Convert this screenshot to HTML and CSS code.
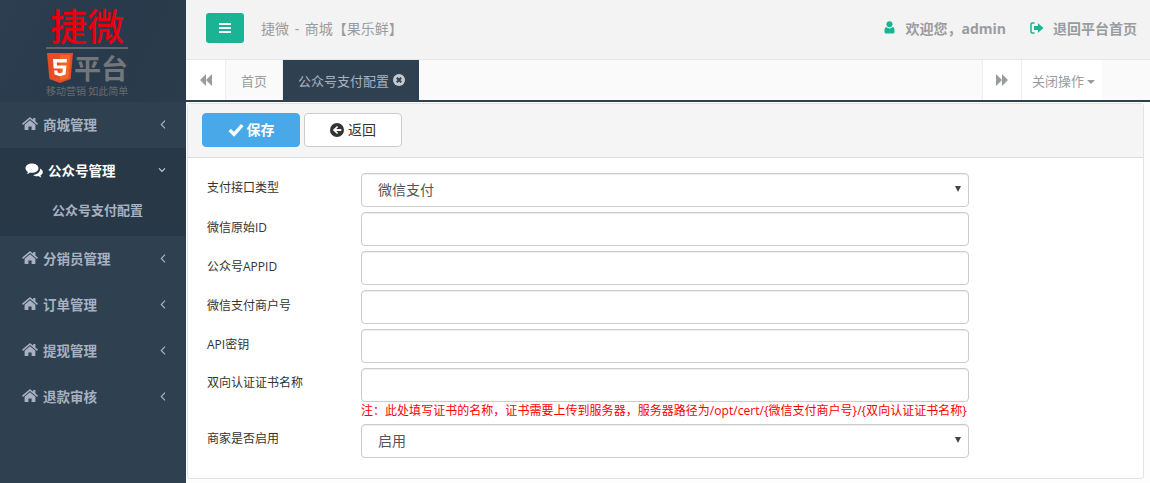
FILE: index.html
```html
<!DOCTYPE html>
<html lang="zh-CN">
<head>
<meta charset="utf-8">
<title>捷微 - 商城</title>
<link rel="stylesheet" href="styles.css">
</head>
<body>
<svg class="sprite" width="0" height="0">
  <symbol id="i-home" viewBox="0 0 16 14"><path fill="currentColor" d="M8 3.2 2.6 7.7V12.500a.5.500 0 0 0 .5.500H6.400V9.500H9.600V13H12.900a.5.500 0 0 0 .5-.5V7.700ZM15.800 6.500 13.400 4.500V1H11.200V2.700L8.600.5a1 1 0 0 0-1.200 0L.2 6.500a.4.400 0 0 0 0 .5l.6.700a.4.400 0 0 0 .5 0L8 2.100l6.700 5.600a.4.400 0 0 0 .5 0l.6-.7a.4.400 0 0 0 0-.5Z"/></symbol>
  <symbol id="i-chev-left" viewBox="0 0 6 9"><path fill="none" stroke="currentColor" stroke-width="1.200" d="M5 .7 1.300 4.500 5 8.300"/></symbol>
</svg>
<div class="app">
  <aside class="sidebar">
    <div class="logo">
      <div class="logo-name">捷微</div>
      <div class="logo-rule"></div>
      <div class="logo-row">
        <svg class="shield" viewBox="0 0 26 30"><path fill="#e44d26" d="M0 0h26l-2.400 26L13 30 2.400 26Z"/><path fill="#f16529" d="M13 2v25.500l8.500-2.400L23.500 2Z"/><path fill="#fff" d="M6 6h14l-.3 3.400H9.800l.2 3.200h9.400l-.8 9L13 23.300l-5.500-1.700-.3-4.100h3.200l.2 2 2.400.7 2.500-.7.300-3.900H6.700Z"/></svg>
        <span class="logo-ping">平台</span>
      </div>
      <div class="logo-slogan">移动营销 如此简单</div>
    </div>
    <nav>
      <a class="menu-item"><svg class="mi"><use href="#i-home"/></svg><span class="mt">商城管理</span><svg class="chev"><use href="#i-chev-left"/></svg></a>
      <div class="menu-open">
        <a class="menu-item active">
          <svg class="mi chat" viewBox="0 0 18 15"><path fill="currentColor" d="M7 .5C3.300.500.500 2.600.500 5.200c0 1.500 1 2.900 2.500 3.800-.2.800-.7 1.500-1.300 2.100 1.300-.2 2.500-.7 3.400-1.500.6.100 1.200.2 1.900.2 3.700 0 6.500-2.100 6.500-4.600S10.700.500 7 .5Z"/><path fill="currentColor" d="M15 5.500c.1.300.1.500.1.800 0 3-3 5.400-7 5.600 1 .8 2.400 1.300 3.900 1.300.5 0 1-.1 1.500-.2.800.7 1.900 1.200 3 1.400-.5-.6-.9-1.200-1-1.900 1.500-.8 2.300-2 2.300-3.400 0-1.500-1.100-2.800-2.800-3.600Z"/></svg>
          <span class="mt">公众号管理</span>
          <svg class="chev-d" viewBox="0 0 12 8"><path fill="none" stroke="currentColor" stroke-width="1.800" d="M1.500 1.500 6 6l4.500-4.500"/></svg>
        </a>
        <a class="submenu-item">公众号支付配置</a>
      </div>
      <a class="menu-item"><svg class="mi"><use href="#i-home"/></svg><span class="mt">分销员管理</span><svg class="chev"><use href="#i-chev-left"/></svg></a>
      <a class="menu-item"><svg class="mi"><use href="#i-home"/></svg><span class="mt">订单管理</span><svg class="chev"><use href="#i-chev-left"/></svg></a>
      <a class="menu-item"><svg class="mi"><use href="#i-home"/></svg><span class="mt">提现管理</span><svg class="chev"><use href="#i-chev-left"/></svg></a>
      <a class="menu-item"><svg class="mi"><use href="#i-home"/></svg><span class="mt">退款审核</span><svg class="chev"><use href="#i-chev-left"/></svg></a>
    </nav>
  </aside>
  <main class="main">
    <header class="topbar">
      <button class="menu-btn" type="button" aria-label="menu"><svg viewBox="0 0 12 10" class="bars"><path fill="#fff" d="M0 0h12v2H0zM0 4h12v2H0zM0 8h12v2H0z"/></svg></button>
      <span class="crumb">捷微 - 商城【果乐鲜】</span>
      <div class="top-right">
        <svg class="ti" viewBox="0 0 12 14"><circle cx="6" cy="3.500" r="3.300" fill="currentColor"/><path fill="currentColor" d="M2.500 6.500C1 7 .5 8.500.5 11c0 1.500.8 2.500 2 2.500h7c1.200 0 2-1 2-2.500 0-2.500-.5-4-2-4.500-1 1-2.100 1.500-3.500 1.500S3.500 7.500 2.500 6.500Z"/></svg>
        <span class="tt welcome">欢迎您，admin</span>
        <svg class="ti out" viewBox="0 0 14 12"><path fill="none" stroke="currentColor" stroke-width="1.500" d="M4.500 1H2.200C1.500 1 1 1.500 1 2.200v7.600c0 .7.500 1.200 1.200 1.200h2.300"/><path fill="currentColor" d="M8 1.200 13.500 6 8 10.800V8H4V4h4Z"/></svg>
        <span class="tt">退回平台首页</span>
      </div>
    </header>
    <div class="tabs">
      <button class="tab-arrow" type="button" aria-label="back"><svg viewBox="0 0 12 12" class="dbl"><path fill="currentColor" d="M6 0v12L0 6ZM12 0v12L6 6Z"/></svg></button>
      <a class="tab">首页</a>
      <a class="tab current">公众号支付配置<svg class="tab-x" viewBox="0 0 12 12"><circle cx="6" cy="6" r="6" fill="#c4c9d0"/><path stroke="#2f4050" stroke-width="2" d="m3.800 3.800 4.400 4.400m0-4.400-4.400 4.400"/></svg></a>
      <span class="tab-fill"></span>
      <button class="tab-arrow right" type="button" aria-label="forward"><svg viewBox="0 0 12 12" class="dbl"><path fill="currentColor" d="M0 0v12l6-6ZM6 0v12l6-6Z"/></svg></button>
      <a class="tab-close">关闭操作<i class="caret"></i></a>
      <span class="tab-end"></span>
    </div>
    <section class="panel">
      <div class="toolbar">
        <button class="btn primary" type="button"><svg viewBox="0 0 14 12" class="bi"><path fill="none" stroke="#fff" stroke-width="3" d="m1.500 6 3.800 3.800 7.200-8"/></svg>保存</button>
        <button class="btn plain" type="button"><svg viewBox="0 0 14 14" class="bi back"><circle cx="7" cy="7" r="7" fill="#333"/><path fill="#fff" d="M2.800 7 7 2.900l1.200 1.200-1.900 1.800h5v2.200h-5l1.900 1.800L7 11.100Z"/></svg>返回</button>
      </div>
      <form class="form">
        <div class="row"><label class="lbl">支付接口类型</label><div class="sel"><select class="ctl"><option>微信支付</option></select></div></div>
        <div class="row"><label class="lbl low">微信原始ID</label><input class="ctl" type="text"></div>
        <div class="row"><label class="lbl low">公众号APPID</label><input class="ctl" type="text"></div>
        <div class="row"><label class="lbl low">微信支付商户号</label><input class="ctl" type="text"></div>
        <div class="row"><label class="lbl low">API密钥</label><input class="ctl" type="text"></div>
        <div class="row note-row">
          <label class="lbl">双向认证证书名称</label>
          <div class="stack">
            <input class="ctl" type="text">
            <div class="note">注：此处填写证书的名称，证书需要上传到服务器，服务器路径为/opt/cert/{微信支付商户号}/{双向认证证书名称}</div>
          </div>
        </div>
        <div class="row"><label class="lbl">商家是否启用</label><div class="sel"><select class="ctl"><option>启用</option></select></div></div>
      </form>
    </section>
  </main>
</div>
</body>
</html>
```
FILE: styles.css
```css
* { box-sizing: border-box; }
html, body { margin: 0; height: 100%; }
body {
  font-family: "Open Sans", "Noto Sans CJK SC", "Liberation Sans", sans-serif;
  font-size: 13px;
  color: #676a6c;
  background: #fdfdfd;
  overflow: hidden;
}
.sprite { position: absolute; }
.app { display: flex; width: 1150px; height: 483px; }

/* Sidebar */
.sidebar { width: 186px; flex: none; background: #2f4050; color: #a7b1c2; }
.logo {
  height: 102px;
  padding: 6px 0 0 46px;
  background: linear-gradient(115deg, #2c3e50 0%, #283a4b 55%, #2b3c4d 100%);
}
.logo-name {
  width: 82px;
  height: 41px;
  font: 500 37px/39px "Noto Sans CJK SC", sans-serif;
  color: #e60012;
  text-align: center;
  white-space: nowrap;
}
.logo-rule { width: 82px; height: 2px; background: #5f676f; }
.logo-row { display: flex; align-items: center; height: 30px; width: 82px; margin-top: 4px; }
.shield { width: 26px; height: 30px; margin-left: 1px; flex: none; }
.logo-ping {
  margin-left: 1px;
  font: 700 27px/30px "Noto Sans CJK SC", sans-serif;
  color: #73777b;
  white-space: nowrap;
}
.logo-slogan {
  width: 84px;
  margin-top: 1px;
  font: 400 10px/14px "Noto Sans CJK SC", sans-serif;
  color: #666b70;
  white-space: nowrap;
}
.menu-item {
  display: flex;
  align-items: center;
  height: 46px;
  padding: 0 0 2px 22px;
  color: #a7b1c2;
  font-size: 13.500px;
  font-weight: 700;
}
.mi { width: 16px; height: 14px; flex: none; margin-right: 5px; color: #a7b1c2; }
.mt { flex: 1; white-space: nowrap; }
.chev { width: 6px; height: 9px; margin-right: 20px; flex: none; color: #a7b1c2; }
.menu-open { background: #293846; height: 88px; }
.menu-item.active { padding-left: 25px; color: #fff; }
.active .mi { width: 18px; height: 15px; color: #fff; }
.chev-d { width: 8px; height: 6px; margin-right: 20px; flex: none; color: #c6ccd6; }
.submenu-item {
  display: block;
  padding: 6px 0 0 52px;
  line-height: 20px;
  font-size: 13px;
  font-weight: 700;
  color: #a7b1c2;
}

/* Main */
.main { flex: 1; min-width: 0; display: flex; flex-direction: column; }
.topbar {
  display: flex;
  align-items: center;
  height: 60px;
  padding: 0 13px 4px 20px;
  background: #f3f3f3;
  border-bottom: 1px solid #e7e7e7;
  flex: none;
}
.menu-btn {
  display: flex;
  align-items: center;
  justify-content: center;
  width: 38px;
  height: 30px;
  padding: 0;
  background: #1ab394;
  border: 0;
  border-radius: 3px;
}
.bars { width: 12px; height: 10px; }
.crumb { margin-left: 17px; color: #999c9e; font-size: 14px; font-weight: 400; word-spacing: 2px; white-space: nowrap; }
.top-right { margin-left: auto; display: flex; align-items: center; }
.ti { width: 11px; height: 13px; color: #1ab394; margin-right: 10px; flex: none; }
.ti.out { width: 14px; height: 12px; margin-right: 9px; margin-left: 24px; }
.tt { color: #999c9e; font-size: 14px; font-weight: 700; white-space: nowrap; }
.tabs {
  display: flex;
  height: 42px;
  flex: none;
  background: #fafafa;
  border-bottom: 2px solid #2f4050;
}
.tab-arrow {
  width: 40px;
  padding: 0;
  border: 0;
  border-right: 1px solid #eee;
  background: #fff;
  color: #999c9e;
  display: flex;
  align-items: center;
  justify-content: center;
}
.tab-arrow.right { width: 40px; border-left: 1px solid #eee; background: #fff; }
.dbl { width: 12px; height: 12px; }
.tab {
  display: flex;
  align-items: center;
  padding: 0 15px;
  color: #999c9e;
  font-size: 13px;
  border-right: 1px solid #eee;
  white-space: nowrap;
}
.tab.current { padding: 0 14px 0 15px; background: #2f4050; color: #a7b1c2; border-right: 0; }
.tab-x { width: 12px; height: 12px; margin-left: 4px; }
.tab-fill { flex: 1; }
.tab-close {
  display: flex;
  align-items: center;
  width: 80px;
  padding-left: 10px;
  background: #fff;
  color: #999c9e;
  font-size: 13px;
  white-space: nowrap;
}
.caret {
  width: 0;
  height: 0;
  margin: 3px 0 0 3px;
  border: 4px solid transparent;
  border-top-color: #999c9e;
  border-bottom: 0;
}
.tab-end { width: 48px; }

/* Panel */
.panel {
  margin: 1px 6px 4px 1px;
  flex: 1;
  min-height: 0;
  background: #fff;
  border: 1px solid #e3e3e3;
  border-radius: 3px;
}
.toolbar {
  display: flex;
  gap: 4px;
  height: 54px;
  padding: 9px 0 0 14px;
  background: #f5f5f5;
  border-bottom: 1px solid #ddd;
}
.btn {
  display: flex;
  align-items: center;
  justify-content: center;
  width: 98px;
  height: 34px;
  padding: 0;
  font: 400 14px/20px "Open Sans", "Noto Sans CJK SC", sans-serif;
  border-radius: 4px;
}
.btn.primary { background: #49a8e8; border: 1px solid #49a8e8; color: #fff; font-weight: 700; }
.btn.plain { background: #fff; border: 1px solid #ccc; color: #333; }
.bi { width: 16px; height: 14px; margin-right: 3px; }
.bi.back { width: 14px; margin-right: 4px; }
.form { display: flex; flex-direction: column; gap: 5px; padding: 15px 0 0 19px; }
.row { display: flex; align-items: flex-start; }
.lbl {
  width: 154px;
  flex: none;
  padding-top: 6px;
  font-size: 12px;
  line-height: 17px;
  color: #333;
  white-space: nowrap;
}
.lbl.low { padding-top: 7px; }
.ctl {
  width: 608px;
  height: 34px;
  padding: 6px 12px;
  font: 400 14px/20px "Open Sans", "Noto Sans CJK SC", sans-serif;
  color: #555;
  background: #fff;
  border: 1px solid #ccc;
  border-radius: 4px;
  box-shadow: inset 0 1px 1px rgba(0, 0, 0, .075);
}
.sel { position: relative; width: 608px; height: 34px; }
select.ctl { display: block; padding: 5px 24px 5px 16px; appearance: none; -webkit-appearance: none; }
.sel::after {
  content: "";
  position: absolute;
  top: 13px;
  right: 8px;
  border: 3px solid transparent;
  border-top: 6px solid #444;
  border-bottom: 0;
}
.stack { display: flex; flex-direction: column; width: 608px; }
.note {
  height: 17px;
  margin-top: 0;
  font-size: 12px;
  line-height: 17px;
  color: #f00;
  letter-spacing: .03px;
  white-space: nowrap;
}
```
